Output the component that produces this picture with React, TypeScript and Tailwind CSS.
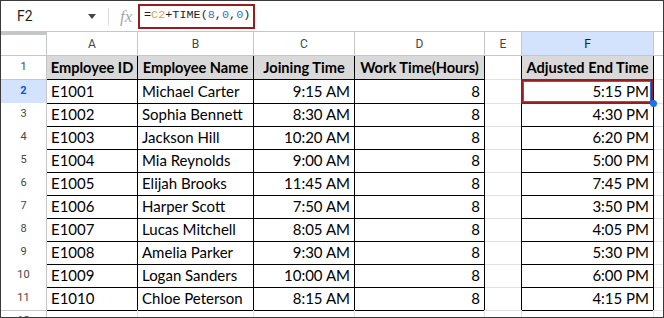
const rows = [
  ["E1001", "Michael Carter", "9:15 AM", "8", "5:15 PM"],
  ["E1002", "Sophia Bennett", "8:30 AM", "8", "4:30 PM"],
  ["E1003", "Jackson Hill", "10:20 AM", "8", "6:20 PM"],
  ["E1004", "Mia Reynolds", "9:00 AM", "8", "5:00 PM"],
  ["E1005", "Elijah Brooks", "11:45 AM", "8", "7:45 PM"],
  ["E1006", "Harper Scott", "7:50 AM", "8", "3:50 PM"],
  ["E1007", "Lucas Mitchell", "8:05 AM", "8", "4:05 PM"],
  ["E1008", "Amelia Parker", "9:30 AM", "8", "5:30 PM"],
  ["E1009", "Logan Sanders", "10:00 AM", "8", "6:00 PM"],
  ["E1010", "Chloe Peterson", "8:15 AM", "8", "4:15 PM"],
]

const cols = "grid grid-cols-[46px_91px_116px_101px_130px_37px_132px_1fr]"
const cellFont = "font-['Lato','Liberation_Sans',sans-serif] text-[15px] text-black"

function RowHead({ n, active }: { n: number; active?: boolean }) {
  return (
    <div
      className={
        active
          ? "flex items-center justify-center border-r border-b border-[#c4c7c5] bg-[#d3e3fd] text-[11px] font-bold text-[#0b57d0] font-['Roboto',sans-serif]"
          : "flex items-center justify-center border-r border-b border-[#c4c7c5] bg-white text-[11px] text-[#444746] font-['Roboto',sans-serif]"
      }
    >
      {n}
    </div>
  )
}

function Cell({ text, right, head }: { text: string; right?: boolean; head?: boolean }) {
  if (head) {
    return (
      <div className="flex items-center justify-center whitespace-nowrap overflow-hidden bg-[#d9d9d9] font-bold border-r border-b border-black font-['Lato','Liberation_Sans',sans-serif] text-[14.6px] text-black">
        {text}
      </div>
    )
  }
  return (
    <div
      className={
        right
          ? `flex items-center justify-end px-[4px] whitespace-nowrap border-r border-b border-black ${cellFont}`
          : `flex items-center px-[4px] whitespace-nowrap border-r border-b border-black ${cellFont}`
      }
    >
      {text}
    </div>
  )
}

export default function App() {
  return (
    <div className="w-[664px] h-[318px] overflow-hidden border border-[#3a3a3a] bg-white">
      {/* formula bar */}
      <div className="flex h-[31px] items-center border-b border-[#c4c7c5]">
        <div className="w-[100px] flex items-center pl-[16px] pr-[4px] font-['Roboto',sans-serif] text-[14px] text-[#1f1f1f]">
          <span className="flex-1">F2</span>
          <svg width="8" height="5" viewBox="0 0 8 5" className="mr-[1px]">
            <path d="M0 0h8L4 5z" fill="#444746" />
          </svg>
        </div>
        <div className="w-px h-[17px] bg-[#d6d8d6] ml-[7px]" />
        <span className="ml-[11px] w-[18px] font-['Liberation_Serif',serif] italic text-[17px] text-[#a8a8a8] leading-none">
          fx
        </span>
        <div className="h-[25px] w-[117px] border-2 border-[#9b1c1f] flex items-center pl-[4px] whitespace-nowrap font-['Liberation_Mono',monospace] text-[11.8px] text-[#1f1f1f]">
          =<span className="text-[#f29b38]">C2</span>+TIME(<span className="text-[#3b6fd1]">8</span>,<span className="text-[#3b6fd1]">0</span>,<span className="text-[#3b6fd1]">0</span>)
        </div>
      </div>

      {/* column headers */}
      <div className={`${cols} h-[24px] font-['Roboto','Liberation_Sans',sans-serif] text-[12px] text-[#444746]`}>
        <div className="border-r border-b border-[#c4c7c5] border-t-[3px] border-t-[#c4c7c5]" />
        {["A", "B", "C", "D", "E"].map((l) => (
          <div key={l} className="flex items-center justify-center border-r border-b border-[#c4c7c5]">
            {l}
          </div>
        ))}
        <div className="flex items-center justify-center border-r border-b border-[#c4c7c5] bg-[#d3e3fd] text-[#041e49]">F</div>
        <div className="border-b border-[#c4c7c5]" />
      </div>

      {/* row 1 */}
      <div className={`${cols} h-[24px]`}>
        <RowHead n={1} />
        <Cell head text="Employee ID" />
        <Cell head text="Employee Name" />
        <Cell head text="Joining Time" />
        <Cell head text="Work Time(Hours)" />
        <div className="border-r border-b border-r-black border-b-[#e2e2e2]" />
        <Cell head text="Adjusted End Time" />
        <div className="border-b border-[#e2e2e2]" />
      </div>

      {rows.map((r, i) => (
        <div key={r[0]} className={`${cols} h-[23px]`}>
          <RowHead n={i + 2} active={i === 0} />
          <Cell text={r[0]} />
          <Cell text={r[1]} />
          <Cell right text={r[2]} />
          <Cell right text={r[3]} />
          <div className="border-r border-b border-r-black border-b-[#e2e2e2]" />
          {i === 0 ? (
            <div className={`relative flex items-center justify-end px-[4px] border-r border-b border-black ${cellFont}`}>
              5:15 PM
              <div className="absolute -left-px -top-px right-0 -bottom-px border-2 border-[#9b1c1f]">
                <div className="h-full w-full border border-[#1a73e8]" />
              </div>
              <div className="absolute -right-[4px] -bottom-[4px] w-[7px] h-[7px] rounded-full bg-[#1a73e8]" />
            </div>
          ) : (
            <Cell right text={r[4]} />
          )}
          <div className="border-b border-[#e2e2e2]" />
        </div>
      ))}

      {/* row 12, cut off by the frame as in the sheet */}
      <div className={`${cols} h-[23px]`}>
        <div className="flex justify-center pt-[3px] border-r border-[#c4c7c5] text-[11px] text-[#444746] font-['Roboto',sans-serif]">12</div>
        <div className="border-r border-[#e2e2e2]" />
        <div className="border-r border-[#e2e2e2]" />
        <div className="border-r border-[#e2e2e2]" />
        <div className="border-r border-[#e2e2e2]" />
        <div className="border-r border-[#e2e2e2]" />
        <div className="border-r border-[#e2e2e2]" />
        <div />
      </div>
    </div>
  )
}
